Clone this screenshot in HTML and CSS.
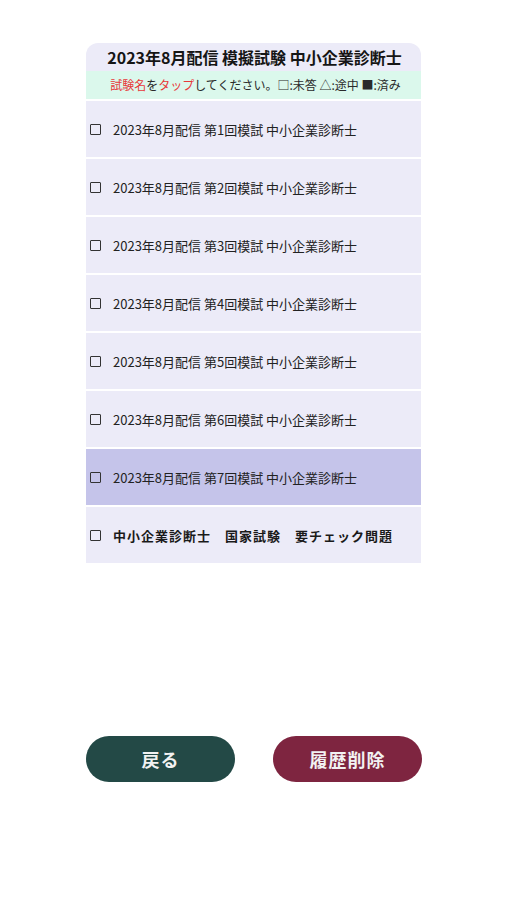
FILE: index.html
```html
<!DOCTYPE html>
<html lang="ja">
<head>
<meta charset="utf-8">
<title>模擬試験</title>
<link rel="stylesheet" href="styles.css">
</head>
<body>
<main class="page">
  <section class="card">
    <header class="card-title">2023年8月配信 模擬試験 中小企業診断士</header>
    <div class="hint"><span class="red">試験名</span>を<span class="red">タップ</span>してください。□:未答 △:途中 ■:済み</div>
    <ul class="list">
      <li class="item"><span class="box"></span><span class="label">2023年8月配信 第1回模試 中小企業診断士</span></li>
      <li class="item"><span class="box"></span><span class="label">2023年8月配信 第2回模試 中小企業診断士</span></li>
      <li class="item"><span class="box"></span><span class="label">2023年8月配信 第3回模試 中小企業診断士</span></li>
      <li class="item"><span class="box"></span><span class="label">2023年8月配信 第4回模試 中小企業診断士</span></li>
      <li class="item"><span class="box"></span><span class="label">2023年8月配信 第5回模試 中小企業診断士</span></li>
      <li class="item"><span class="box"></span><span class="label">2023年8月配信 第6回模試 中小企業診断士</span></li>
      <li class="item active"><span class="box"></span><span class="label">2023年8月配信 第7回模試 中小企業診断士</span></li>
      <li class="item"><span class="box"></span><span class="label bold">中小企業診断士　国家試験　要チェック問題</span></li>
    </ul>
  </section>
  <div class="actions">
    <button class="btn back">戻る</button>
    <button class="btn clear">履歴削除</button>
  </div>
</main>
</body>
</html>
```
FILE: styles.css
```css
* { box-sizing: border-box; }
html, body { margin: 0; padding: 0; background: #ffffff; }
body {
  font-family: "Noto Sans CJK JP", "Noto Sans", sans-serif;
  color: #222;
  width: 507px;
  height: 900px;
}
.page {
  padding: 43px 85px 0 86px;
}
.card {
  width: 335px;
}
.card-title {
  height: 28px;
  background: #ecebf8;
  border-radius: 12px 12px 0 0;
  font-size: 16px;
  font-weight: bold;
  color: #151515;
  display: flex;
  align-items: center;
  justify-content: center;
  padding-left: 2px;
  line-height: 1;
}
.hint {
  height: 28px;
  background: #dbf8ec;
  font-size: 12px;
  color: #2a2a2a;
  display: flex;
  align-items: center;
  justify-content: center;
  padding-left: 4px;
  line-height: 1;
}
.red { color: #e8393a; }
.list {
  list-style: none;
  margin: 0;
  padding: 0;
}
.item {
  margin-top: 2px;
  height: 56px;
  background: #ecebf8;
  display: flex;
  align-items: center;
  padding-left: 4px;
}
.item.active { background: #c5c4ea; }
.box {
  width: 11px;
  height: 11px;
  border: 1.8px solid #333;
  border-radius: 1px;
  flex: none;
}
.label {
  margin-left: 12px;
  font-size: 13px;
  color: #222;
  line-height: 1;
}
.label.bold {
  font-weight: bold;
  letter-spacing: 1px;
  color: #1a1a1a;
}
.actions {
  margin-top: 173px;
  width: 336px;
  display: flex;
  justify-content: space-between;
}
.btn {
  width: 149px;
  height: 46px;
  border: none;
  border-radius: 23px;
  font-family: "Noto Sans CJK JP", "Noto Sans", sans-serif;
  font-size: 18px;
  font-weight: bold;
  letter-spacing: 1px;
  color: #f2f2f2;
  display: flex;
  align-items: center;
  justify-content: center;
  padding: 0;
}
.back { background: #234946; }
.clear { background: #7e2540; }
```
